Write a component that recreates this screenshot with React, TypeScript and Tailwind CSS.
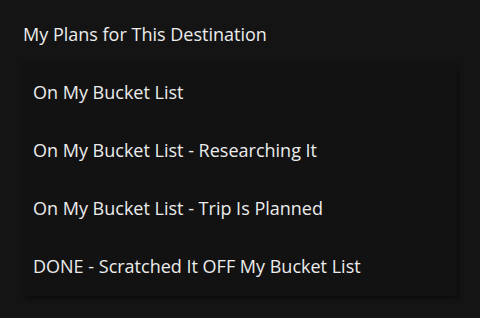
const options = [
  "On My Bucket List",
  "On My Bucket List - Researching It",
  "On My Bucket List - Trip Is Planned",
  "DONE - Scratched It OFF My Bucket List",
];

export default function App() {
  return (
    <div
      className="w-[480px] h-[318px] bg-[#141414] text-[#ececec] overflow-hidden"
      style={{ fontFamily: "'Open Sans', 'Noto Sans', sans-serif" }}
    >
      <div className="pl-[23px] pt-[21px] text-[18px] leading-[26px]">My Plans for This Destination</div>
      <ul className="ml-[23px] mt-[15px] w-[434px] bg-[#121212] py-px shadow-[2px_3px_4px_rgba(0,0,0,0.35)]">
        {options.map((o) => (
          <li key={o} className="h-[58px] flex items-center pl-[10px] text-[18px]">
            {o}
          </li>
        ))}
      </ul>
    </div>
  );
}
